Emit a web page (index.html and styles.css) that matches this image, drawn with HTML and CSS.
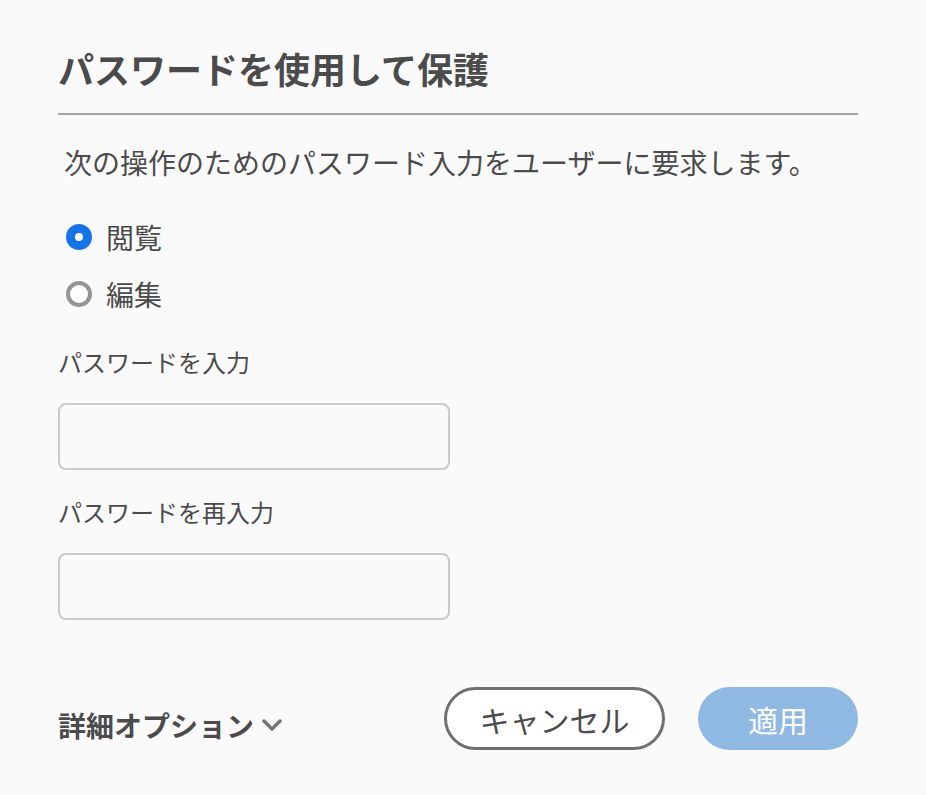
FILE: index.html
```html
<!DOCTYPE html>
<html lang="ja">
<head>
  <meta charset="UTF-8" />
  <meta name="viewport" content="width=device-width, initial-scale=1" />
  <title>パスワードを使用して保護</title>
  <link rel="stylesheet" href="styles.css">
</head>
<body>
  <main class="dialog">
    <h1 class="dialog-title">パスワードを使用して保護</h1>
    <hr class="divider" />

    <p class="intro">次の操作のためのパスワード入力をユーザーに要求します。</p>

    <!-- Protection target -->
    <div class="radio-group">
      <label class="radio-row">
        <span class="radio checked"></span>
        <span class="radio-label">閲覧</span>
      </label>
      <label class="radio-row">
        <span class="radio"></span>
        <span class="radio-label">編集</span>
      </label>
    </div>

    <!-- Password fields -->
    <div class="field">
      <label class="field-label" for="pw">パスワードを入力</label>
      <input class="field-input" type="password" id="pw" />
    </div>
    <div class="field">
      <label class="field-label" for="pw2">パスワードを再入力</label>
      <input class="field-input" type="password" id="pw2" />
    </div>

    <footer class="dialog-footer">
      <button class="more-options" type="button">
        詳細オプション
        <svg class="chevron" width="20" height="12" viewBox="0 0 20 12">
          <polyline points="2,2 10,10 18,2" fill="none" stroke="#757575" stroke-width="3.5" stroke-linecap="round" stroke-linejoin="round" />
        </svg>
      </button>
      <div class="actions">
        <button class="btn btn-cancel" type="button">キャンセル</button>
        <button class="btn btn-apply" type="button">適用</button>
      </div>
    </footer>
  </main>
</body>
</html>
```

FILE: styles.css
```css
body {
  margin: 0;
  padding: 0;
  background-color: #fafafa;
  font-family: "Noto Sans CJK JP", "Noto Sans", sans-serif;
  color: #4b4b4b;
}

.dialog {
  width: 800px;
  padding: 46px 0 0 58px;
}

.dialog-title {
  margin: 0;
  font-size: 36px;
  line-height: 44px;
  font-weight: 700;
  color: #4b4b4b;
}

.divider {
  margin: 23px 0 0 0;
  border: none;
  border-top: 2px solid #a3a3a3;
  height: 0;
}

.intro {
  margin: 27px 0 0 6px;
  font-size: 28px;
  line-height: 40px;
}

.radio-group {
  margin-top: 26px;
}

.radio-row {
  display: flex;
  align-items: center;
  height: 57px;
  padding-left: 8px;
  gap: 14px;
}

.radio {
  box-sizing: border-box;
  width: 26px;
  height: 26px;
  border-radius: 50%;
  border: 4px solid #959595;
  background: #fff;
}

.radio.checked {
  border: 9px solid #1473e6;
}

.radio-label {
  font-size: 28px;
  line-height: 40px;
}

.field {
  margin-top: 23px;
}

.field + .field {
  margin-top: 25px;
}

.field-label {
  display: block;
  font-size: 24px;
  line-height: 34px;
  margin-bottom: 24px;
}

.field-input {
  display: block;
  box-sizing: border-box;
  width: 392px;
  height: 67px;
  border: 2px solid #cacaca;
  border-radius: 8px;
  background: #fafafa;
}

.dialog-footer {
  display: flex;
  align-items: center;
  justify-content: space-between;
  margin-top: 67px;
}

.more-options {
  display: flex;
  align-items: center;
  gap: 8px;
  padding: 0;
  margin-top: 12px;
  border: none;
  background: none;
  font-family: inherit;
  font-size: 28px;
  font-weight: 700;
  color: #4b4b4b;
}

.actions {
  display: flex;
  gap: 33px;
}

.btn {
  box-sizing: border-box;
  height: 63px;
  border-radius: 32px;
  font-family: inherit;
  font-size: 30px;
}

.btn-cancel {
  width: 221px;
  border: 3px solid #707070;
  background: #fff;
  color: #4b4b4b;
}

.btn-apply {
  width: 160px;
  border: none;
  background: #8fb8e3;
  color: #fff;
}
```
